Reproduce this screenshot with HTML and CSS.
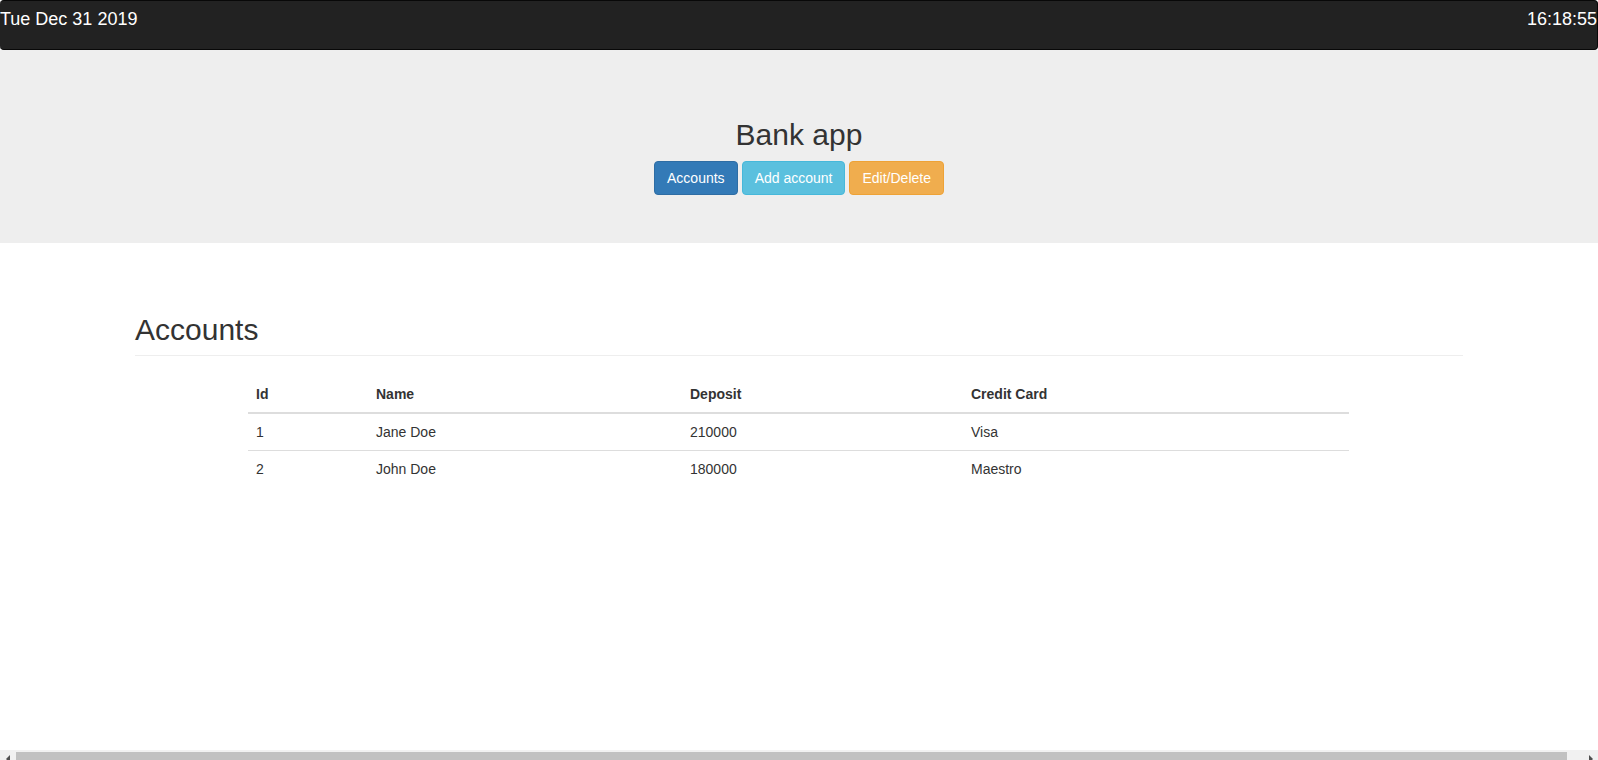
FILE: index.html
```html
<!DOCTYPE html>
<html lang="en">
<head>
<meta charset="utf-8">
<title>Bank app</title>
<link rel="stylesheet" href="styles.css">
</head>
<body>
<nav class="topbar">
  <span class="topbar-text">Tue Dec 31 2019</span>
  <span class="topbar-text">16:18:55</span>
</nav>
<header class="jumbo">
  <h2 class="app-title">Bank app</h2>
  <div class="btn-row">
    <button class="btn btn-primary">Accounts</button>
    <button class="btn btn-info">Add account</button>
    <button class="btn btn-warning">Edit/Delete</button>
  </div>
</header>
<main class="container">
  <div class="page-header"><h2 class="section-title">Accounts</h2></div>
  <table class="table">
    <colgroup>
      <col class="col-id"><col class="col-name"><col class="col-deposit"><col class="col-card">
    </colgroup>
    <thead>
      <tr><th>Id</th><th>Name</th><th>Deposit</th><th>Credit Card</th></tr>
    </thead>
    <tbody>
      <tr><td>1</td><td>Jane Doe</td><td>210000</td><td>Visa</td></tr>
      <tr class="row-sep"><td>2</td><td>John Doe</td><td>180000</td><td>Maestro</td></tr>
    </tbody>
  </table>
</main>
<div class="hscroll">
  <div class="hs-btn"><span class="arrow-left"></span></div>
  <div class="hs-track"><div class="hs-thumb"></div></div>
  <div class="hs-btn"><span class="arrow-right"></span></div>
</div>
</body>
</html>
```
FILE: styles.css
```css
* { box-sizing: border-box; }
html, body {
  margin: 0;
  padding: 0;
  background: #fff;
  font-family: "Liberation Sans", Arial, sans-serif;
  color: #333;
  font-size: 14px;
  line-height: 20px;
}
.topbar {
  height: 50px;
  background: #222;
  border: 1px solid #080808;
  border-left-width: 0;
  border-radius: 4px;
  display: flex;
  justify-content: space-between;
  align-items: flex-start;
  padding-top: 8px;
}
.topbar-text {
  color: #fff;
  font-size: 18px;
  line-height: 21px;
}
.jumbo {
  background: #eee;
  text-align: center;
  padding: 68px 0 48px;
}
.app-title {
  margin: 0;
  font-size: 30px;
  line-height: 33px;
  font-weight: normal;
  color: #333;
}
.btn-row {
  margin-top: 10px;
  display: flex;
  justify-content: center;
  gap: 4px;
}
.btn {
  font-family: "Liberation Sans", Arial, sans-serif;
  font-size: 14px;
  line-height: 20px;
  padding: 6px 12px;
  border: 1px solid transparent;
  border-radius: 4px;
  color: #fff;
  cursor: pointer;
  height: 34px;
}
.btn-primary { background: #337ab7; border-color: #2e6da4; }
.btn-info { background: #5bc0de; border-color: #46b8da; }
.btn-warning { background: #f0ad4e; border-color: #eea236; }
.container {
  margin: 0 135px;
  padding-top: 70px;
}
.page-header {
  padding-bottom: 9px;
  border-bottom: 1px solid #eee;
  margin-bottom: 20px;
}
.section-title {
  margin: 0;
  font-size: 30px;
  line-height: 33px;
  font-weight: normal;
}
.table {
  width: 1101px;
  margin: 0 0 0 113px;
  border-collapse: separate;
  border-spacing: 0;
  table-layout: fixed;
}
.col-id { width: 120px; }
.col-name { width: 314px; }
.col-deposit { width: 281px; }
.col-card { width: 386px; }
.table th, .table td {
  padding: 8px;
  text-align: left;
  vertical-align: top;
}
.table th {
  font-weight: bold;
  border-bottom: 2px solid #ddd;
}
.row-sep td { border-top: 1px solid #ddd; }
.hscroll {
  position: fixed;
  left: 0;
  right: 0;
  top: 750px;
  height: 17px;
  background: #f1f1f1;
  display: flex;
}
.hs-btn {
  width: 16px;
  flex: 0 0 16px;
  display: flex;
  align-items: center;
  justify-content: center;
}
.hs-btn:last-child { flex-basis: 31px; justify-content: flex-end; padding-right: 5px; }
.hs-track {
  flex: 1;
  padding: 2px 0;
}
.hs-thumb {
  height: 100%;
  background: #c1c1c1;
}
.arrow-left {
  width: 0; height: 0;
  border-top: 4px solid transparent;
  border-bottom: 4px solid transparent;
  border-right: 4px solid #505050;
}
.arrow-right {
  width: 0; height: 0;
  border-top: 4px solid transparent;
  border-bottom: 4px solid transparent;
  border-left: 4px solid #505050;
}
```
